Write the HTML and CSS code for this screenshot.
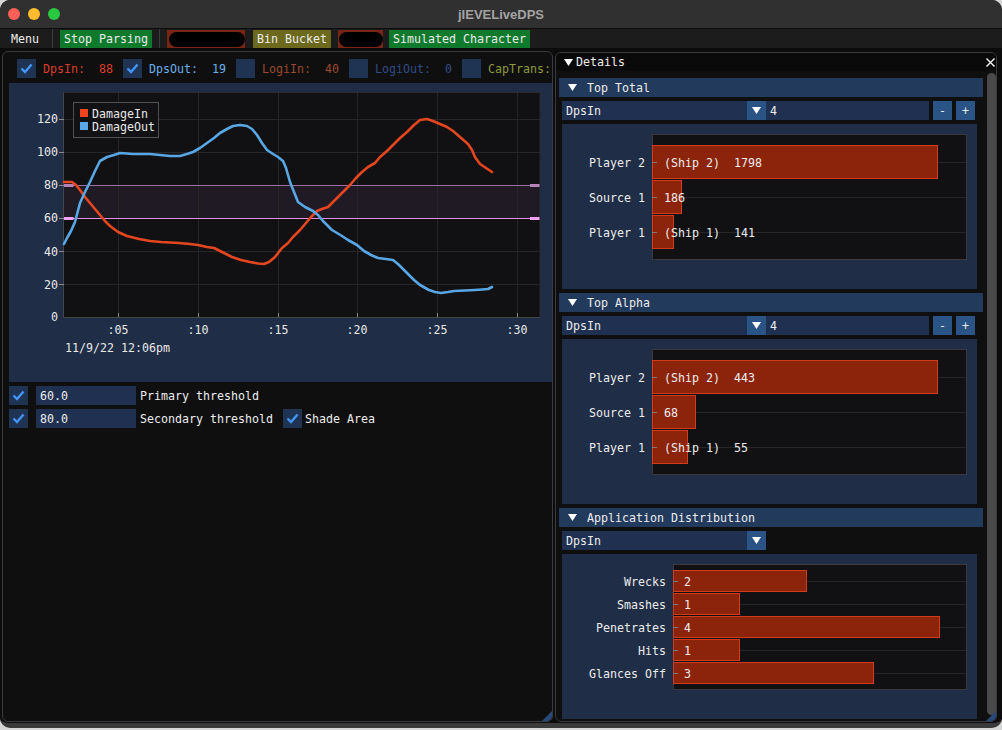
FILE: index.html
```html
<!DOCTYPE html>
<html>
<head>
<meta charset="utf-8">
<title>jIEVELiveDPS</title>
<link rel="stylesheet" href="styles.css">
</head>
<body>
<div class="app">
  <header class="titlebar">
    <div class="lights">
      <span class="light l-red"></span>
      <span class="light l-yellow"></span>
      <span class="light l-green"></span>
    </div>
    <div class="title">jIEVELiveDPS</div>
    <div></div>
  </header>

  <nav class="menubar">
    <span class="menu-label">Menu</span>
    <span class="msep sep1"></span>
    <span class="mbtn green stop">Stop Parsing</span>
    <span class="msep sep2"></span>
    <span class="redact r1"><span class="blob"></span></span>
    <span class="mbtn olive bin">Bin Bucket</span>
    <span class="redact r2"><span class="blob"></span></span>
    <span class="mbtn green sim">Simulated Character</span>
  </nav>

  <main class="workspace">
    <section class="win main-win">
      <div class="toggles">
        <div class="toggle"><span class="cb"><svg width="19" height="19" viewBox="0 0 19 19"><polyline points="4.5,9.5 8,13 14.5,5.5" class="tick"/></svg></span><span class="lbl c-dpsin">DpsIn:  88</span></div>
        <div class="toggle"><span class="cb"><svg width="19" height="19" viewBox="0 0 19 19"><polyline points="4.5,9.5 8,13 14.5,5.5" class="tick"/></svg></span><span class="lbl c-dpsout">DpsOut:  19</span></div>
        <div class="toggle"><span class="cb"></span><span class="lbl c-logiin">LogiIn:  40</span></div>
        <div class="toggle"><span class="cb"></span><span class="lbl c-logiout">LogiOut:  0</span></div>
        <div class="toggle"><span class="cb"></span><span class="lbl c-cap">CapTrans:</span></div>
      </div>

      <div class="chart-frame">
        <svg class="chart" width="543" height="299" viewBox="9 83 543 299">
          <rect x="63.5" y="92" width="476.5" height="225" fill="#111113"/>
          <rect x="64" y="185" width="476" height="33" fill="#201a24"/>
          <g class="grid">
            <line x1="64" x2="540" y1="119.5" y2="119.5"/>
            <line x1="64" x2="540" y1="152.5" y2="152.5"/>
            <line x1="64" x2="540" y1="251.5" y2="251.5"/>
            <line x1="64" x2="540" y1="284.5" y2="284.5"/>
            <line x1="118.5" x2="118.5" y1="92" y2="317"/>
            <line x1="198.5" x2="198.5" y1="92" y2="317"/>
            <line x1="278.5" x2="278.5" y1="92" y2="317"/>
            <line x1="357.5" x2="357.5" y1="92" y2="317"/>
            <line x1="437.5" x2="437.5" y1="92" y2="317"/>
            <line x1="517.5" x2="517.5" y1="92" y2="317"/>
          </g>
          <line x1="64" x2="540" y1="185.5" y2="185.5" stroke="#a06ea6" stroke-width="1"/>
          <line x1="64" x2="540" y1="218.5" y2="218.5" stroke="#e48fe6" stroke-width="1"/>
          <rect x="63.5" y="184" width="10" height="3" fill="#b583b9"/>
          <rect x="530" y="184" width="10" height="3" fill="#b583b9"/>
          <rect x="63.5" y="217" width="10" height="3" fill="#f0a2f0"/>
          <rect x="530" y="217" width="10" height="3" fill="#f0a2f0"/>
          <g class="axis">
            <line x1="63.5" x2="63.5" y1="92" y2="317.5"/>
            <line x1="63.5" x2="540" y1="317.5" y2="317.5"/>
            <line x1="540" x2="540" y1="92" y2="317.5" class="edge"/>
            <line x1="63.5" x2="540" y1="92.5" y2="92.5" class="edge"/>
          </g>
          <g class="ticks">
            <line x1="59" x2="64" y1="119.5" y2="119.5"/>
            <line x1="59" x2="64" y1="152.5" y2="152.5"/>
            <line x1="59" x2="64" y1="185.5" y2="185.5"/>
            <line x1="59" x2="64" y1="218.5" y2="218.5"/>
            <line x1="59" x2="64" y1="251.5" y2="251.5"/>
            <line x1="59" x2="64" y1="284.5" y2="284.5"/>
            <line x1="118.5" x2="118.5" y1="313" y2="317"/>
            <line x1="198.5" x2="198.5" y1="313" y2="317"/>
            <line x1="278.5" x2="278.5" y1="313" y2="317"/>
            <line x1="357.5" x2="357.5" y1="313" y2="317"/>
            <line x1="437.5" x2="437.5" y1="313" y2="317"/>
            <line x1="517.5" x2="517.5" y1="313" y2="317"/>
          </g>
          <g class="ylabels">
            <text x="58" y="123">120</text>
            <text x="58" y="156">100</text>
            <text x="58" y="189">80</text>
            <text x="58" y="222">60</text>
            <text x="58" y="256">40</text>
            <text x="58" y="289">20</text>
            <text x="58" y="321">0</text>
          </g>
          <g class="xlabels">
            <text x="118" y="334">:05</text>
            <text x="198" y="334">:10</text>
            <text x="278" y="334">:15</text>
            <text x="357" y="334">:20</text>
            <text x="437" y="334">:25</text>
            <text x="517" y="334">:30</text>
          </g>
          <text class="date" x="65" y="352">11/9/22 12:06pm</text>

          <polyline class="curve c-in" points="64,182 72,182 76,185 80,190 85,197 90,203 95,209 100,215 105,221 110,226 118,232 127,236 139,239 150,241 161,242 179,243 190,244 198,245 207,247 214,248 222,252 232,257 241,260 250,262 258,263.5 264,264 269,262 275,257 282,248 288,243 293,237 300,230 306,223 311,217 317,211 322,209 328,207 333,202 338,197 344,191 350,185 356,178 362,172 368,167 375,163 380,157 387,151 393,145 400,138 407,132 414,125 420,120 427,119 433,121 440,124 447,127 453,131 460,137 468,144 472,150 475,157 480,164 486,168 492,172"/>
          <polyline class="curve c-out" points="64,244 67,238 71,231 75,222 80,203 85,192 90,182 95,171 100,161 107,157 114,155 120,153 133,154 150,154 160,155 170,156 180,156 187,154 193,152 200,148 207,143 214,138 220,133 227,129 233,126 240,125 247,126 252,129 257,135 262,143 267,150 273,154 278,157 283,161 286,168 290,182 294,192 298,202 305,207 313,211 318,215 323,221 328,226 332,230 337,233 342,236 348,240 357,245 364,251 371,255 378,258 386,259 393,260 398,264 404,270 409,275 414,280 420,285 429,290 435,292 441,293 448,292 454,291 465,290.5 475,290 482,289.5 488,289 492,287"/>

          <g class="legend">
            <rect x="73.5" y="102.5" width="85" height="35" class="legend-box"/>
            <rect x="80" y="109" width="8" height="8" fill="#ee4420"/>
            <rect x="80" y="122" width="8" height="8" fill="#5aaaea"/>
            <text x="92" y="118">DamageIn</text>
            <text x="92" y="131">DamageOut</text>
          </g>
        </svg>
      </div>

      <div class="thresholds">
        <div class="trow">
          <span class="cb"><svg width="19" height="19" viewBox="0 0 19 19"><polyline points="4.5,9.5 8,13 14.5,5.5" class="tick"/></svg></span>
          <span class="input">60.0</span>
          <span class="tlbl">Primary threshold</span>
        </div>
        <div class="trow">
          <span class="cb"><svg width="19" height="19" viewBox="0 0 19 19"><polyline points="4.5,9.5 8,13 14.5,5.5" class="tick"/></svg></span>
          <span class="input">80.0</span>
          <span class="tlbl">Secondary threshold</span>
          <span class="cb shade-cb"><svg width="19" height="19" viewBox="0 0 19 19"><polyline points="4.5,9.5 8,13 14.5,5.5" class="tick"/></svg></span>
          <span class="shade-lbl">Shade Area</span>
        </div>
      </div>
      <span class="grip"></span>
    </section>

    <section class="win details">
      <div class="win-title">
        <svg class="tri" width="9" height="7" viewBox="0 0 9 7"><polygon points="0,0 9,0 4.5,7"/></svg>
        <span class="wt-text">Details</span>
        <svg class="close" width="9" height="9" viewBox="0 0 9 9"><path d="M0.5 0.5 L8.5 8.5 M8.5 0.5 L0.5 8.5"/></svg>
      </div>
      <div class="details-body">
        <div class="header">
          <svg class="tri" width="9" height="7" viewBox="0 0 9 7"><polygon points="0,0 9,0 4.5,7"/></svg>
          <span>Top Total</span>
        </div>
        <div class="controls">
          <span class="combo">DpsIn</span>
          <span class="arrow"><svg width="9" height="7" viewBox="0 0 9 7"><polygon points="0,0 9,0 4.5,7" fill="#fff"/></svg></span>
          <span class="num">4</span>
          <span class="pm">-</span>
          <span class="pm">+</span>
        </div>
        <div class="frame top">
          <div class="labels">
            <span>Player 2</span>
            <span>Source 1</span>
            <span>Player 1</span>
          </div>
          <div class="plot">
            <div class="brow"><div class="bar" style="width:90.9%"></div><span class="val">(Ship 2)  1798</span></div>
            <div class="brow"><div class="bar" style="width:9.4%"></div><span class="val">186</span></div>
            <div class="brow"><div class="bar" style="width:7.1%"></div><span class="val">(Ship 1)  141</span></div>
          </div>
        </div>

        <div class="header">
          <svg class="tri" width="9" height="7" viewBox="0 0 9 7"><polygon points="0,0 9,0 4.5,7"/></svg>
          <span>Top Alpha</span>
        </div>
        <div class="controls">
          <span class="combo">DpsIn</span>
          <span class="arrow"><svg width="9" height="7" viewBox="0 0 9 7"><polygon points="0,0 9,0 4.5,7" fill="#fff"/></svg></span>
          <span class="num">4</span>
          <span class="pm">-</span>
          <span class="pm">+</span>
        </div>
        <div class="frame top">
          <div class="labels">
            <span>Player 2</span>
            <span>Source 1</span>
            <span>Player 1</span>
          </div>
          <div class="plot">
            <div class="brow"><div class="bar" style="width:90.9%"></div><span class="val">(Ship 2)  443</span></div>
            <div class="brow"><div class="bar" style="width:13.9%"></div><span class="val">68</span></div>
            <div class="brow"><div class="bar" style="width:11.3%"></div><span class="val">(Ship 1)  55</span></div>
          </div>
        </div>

        <div class="header">
          <svg class="tri" width="9" height="7" viewBox="0 0 9 7"><polygon points="0,0 9,0 4.5,7"/></svg>
          <span>Application Distribution</span>
        </div>
        <div class="controls">
          <span class="combo">DpsIn</span>
          <span class="arrow"><svg width="9" height="7" viewBox="0 0 9 7"><polygon points="0,0 9,0 4.5,7" fill="#fff"/></svg></span>
        </div>
        <div class="frame dist">
          <div class="labels">
            <span>Wrecks</span>
            <span>Smashes</span>
            <span>Penetrates</span>
            <span>Hits</span>
            <span>Glances Off</span>
          </div>
          <div class="plot">
            <div class="brow"><div class="bar" style="width:45.45%"></div><span class="val">2</span></div>
            <div class="brow"><div class="bar" style="width:22.7%"></div><span class="val">1</span></div>
            <div class="brow"><div class="bar" style="width:90.9%"></div><span class="val">4</span></div>
            <div class="brow"><div class="bar" style="width:22.7%"></div><span class="val">1</span></div>
            <div class="brow"><div class="bar" style="width:68.2%"></div><span class="val">3</span></div>
          </div>
        </div>
      </div>
      <span class="scrollbar"></span>
      <span class="grip"></span>
    </section>
  </main>
</div>
</body>
</html>
```

FILE: styles.css
```css
* { box-sizing: border-box; }

html, body {
  margin: 0;
  padding: 0;
}

body {
  width: 1002px;
  height: 730px;
  overflow: hidden;
  background: #d6d6d6;
  font-family: "DejaVu Sans Mono", "Liberation Mono", monospace;
  font-size: 11.63px;
  color: #ececec;
}

.app {
  width: 1002px;
  height: 728px;
  border-radius: 10px;
  overflow: hidden;
  background: #0c0c0c;
  display: flex;
  flex-direction: column;
  border-bottom: 5px solid #3a3a3a;
}

/* ---------- mac title bar ---------- */
.titlebar {
  height: 29px;
  flex: none;
  background: #303030;
  border-bottom: 1px solid #0c0c0c;
  display: grid;
  grid-template-columns: 1fr auto 1fr;
  align-items: center;
}
.lights {
  display: flex;
  gap: 8px;
  padding-left: 8px;
}
.light {
  width: 12px;
  height: 12px;
  border-radius: 50%;
}
.l-red { background: #fe5f57; }
.l-yellow { background: #febc2e; }
.l-green { background: #28c840; }
.title {
  font-family: "Liberation Sans", Arial, sans-serif;
  font-weight: bold;
  font-size: 13px;
  color: #a3a3a3;
}

/* ---------- menu bar ---------- */
.menubar {
  height: 19px;
  flex: none;
  background: #1c1c1c;
  display: flex;
  align-items: stretch;
  line-height: 19px;
  white-space: nowrap;
}
.menu-label { margin-left: 11px; padding-top: 1px; }
.msep {
  width: 1px;
  background: #3d3d3d;
}
.sep1 { margin-left: 13px; }
.sep2 { margin-left: 7px; }
.mbtn {
  margin-top: 1px;
  line-height: 18px;
  padding: 0 4px;
}
.green { background: #0f7a2c; }
.olive { background: #6c691d; }
.stop { margin-left: 7px; }
.bin { margin-left: 8px; }
.sim { margin-left: 6px; }
.redact {
  margin-top: 1px;
  background: #7a2513;
  display: flex;
  align-items: center;
}
.redact .blob {
  display: block;
  height: 15px;
  background: #000;
  border-radius: 8px;
}
.r1 { margin-left: 7px; width: 78px; }
.r1 .blob { width: 80px; margin-left: 2px; }
.r2 { margin-left: 7px; width: 45px; }
.r2 .blob { width: 45px; margin-left: 1px; }

/* ---------- workspace & windows ---------- */
.workspace {
  flex: 1;
  display: flex;
  align-items: flex-start;
  gap: 2px;
  padding: 3px 0 0 2px;
  background: #0c0c0c;
}
.win {
  position: relative;
  background: #0f0f0f;
  border: 1px solid #3a3a40;
  border-radius: 6px;
  flex: none;
}

.main-win {
  width: 551px;
  height: 671px;
  padding: 7px 0 0 6px;
}

.toggles {
  margin-left: 8px;
  width: 535px;
  height: 19px;
  display: flex;
  align-items: center;
  white-space: nowrap;
}
.toggle {
  display: flex;
  align-items: center;
  flex: none;
  margin-right: 10px;
}
.toggle .lbl {
  margin-left: 7px;
  white-space: pre;
  line-height: 19px;
  padding-top: 2px;
}
.c-dpsin { color: #dc3d2a; }
.c-dpsout { color: #69afee; }
.c-logiin { color: #9a4a2e; }
.c-logiout { color: #304c84; }
.c-cap { color: #8e9a3c; }

.cb {
  width: 19px;
  height: 19px;
  flex: none;
  background: #1f3352;
  display: block;
}
.cb svg { display: block; }
.tick {
  fill: none;
  stroke: #4296fa;
  stroke-width: 2.4;
  stroke-linecap: butt;
  stroke-linejoin: miter;
}

.chart-frame {
  margin-top: 5px;
  width: 543px;
  height: 299px;
  background: #1f2d46;
}
.chart { display: block; }
.chart text {
  font-family: "DejaVu Sans Mono", "Liberation Mono", monospace;
  font-size: 11.63px;
  fill: #e8e8e8;
}
.grid line { stroke: #262629; stroke-width: 1; }
.axis line { stroke: #45454a; stroke-width: 1; }
.axis line.edge { stroke: #2a2a2e; }
.ticks line { stroke: #8a8a8a; stroke-width: 1; }
.ylabels text { text-anchor: end; }
.xlabels text { text-anchor: middle; }
.curve {
  fill: none;
  stroke-width: 2.6;
  stroke-linejoin: round;
  stroke-linecap: round;
}
.c-in { stroke: #e4461f; }
.c-out { stroke: #58a7e4; }
.legend-box {
  fill: #121214;
  stroke: #505055;
  stroke-width: 1;
}

.thresholds {
  margin-top: 4px;
  display: flex;
  flex-direction: column;
  gap: 4px;
}
.trow {
  height: 19px;
  display: flex;
  align-items: center;
  line-height: 19px;
  white-space: nowrap;
}
.input {
  width: 100px;
  height: 19px;
  margin-left: 8px;
  padding: 1px 0 0 4px;
  background: #1f3050;
}
.tlbl { margin-left: 4px; padding-top: 2px; }
.shade-cb { margin-left: 10px; }
.shade-lbl { margin-left: 3px; padding-top: 2px; }

.grip {
  position: absolute;
  right: 0;
  bottom: 0;
  width: 10px;
  height: 10px;
  background: #284a78;
  clip-path: polygon(100% 0, 100% 100%, 0 100%);
  border-bottom-right-radius: 5px;
}

/* ---------- details window ---------- */
.details {
  width: 442px;
  height: 670px;
  margin-top: 1px;
  display: flex;
  flex-direction: column;
}
.win-title {
  height: 18px;
  flex: none;
  background: #0a0a0a;
  border-radius: 5px 5px 0 0;
  display: flex;
  align-items: center;
  padding-left: 8px;
  line-height: 18px;
}
.tri { display: block; flex: none; }
.tri polygon { fill: #ffffff; }
.wt-text { margin-left: 3px; }
.close {
  display: block;
  margin-left: auto;
  margin-right: 1px;
}
.close path {
  stroke: #ffffff;
  stroke-width: 1.3;
  fill: none;
}

.details-body {
  flex: 1;
  padding: 7px 0 0 6px;
  display: flex;
  flex-direction: column;
  gap: 4px;
}
.header {
  margin-left: -3px;
  width: 424px;
  height: 19px;
  flex: none;
  background: #223a5c;
  display: flex;
  align-items: center;
  padding-left: 9px;
  line-height: 19px;
}
.header span { margin-left: 10px; padding-top: 2px; }

.controls {
  height: 19px;
  flex: none;
  display: flex;
  line-height: 19px;
}
.combo {
  width: 185px;
  padding: 1px 0 0 4px;
  background: #1f3050;
}
.arrow {
  width: 19px;
  background: #2b5486;
  display: flex;
  align-items: center;
  justify-content: center;
}
.arrow svg { display: block; }
.num {
  width: 163px;
  padding: 1px 0 0 4px;
  background: #1f3050;
}
.pm {
  width: 19px;
  margin-left: 4px;
  padding-top: 1px;
  background: #2b5486;
  text-align: center;
}

.frame {
  width: 415px;
  height: 165px;
  flex: none;
  background: #1f2d46;
  padding-top: 10px;
  display: grid;
  align-items: start;
}
.frame.top { grid-template-columns: 90px 315px; }
.frame.dist { grid-template-columns: 111px 294px; }

.labels {
  display: flex;
  flex-direction: column;
  gap: 1px;
  padding-right: 7px;
  text-align: right;
  white-space: pre;
}
.labels span { padding-top: 1px; }
.plot {
  height: 126px;
  background: #111113;
  box-shadow: inset 0 0 0 1px #3a3a3e;
  display: flex;
  flex-direction: column;
  gap: 1px;
}
.top .labels, .top .plot { padding-top: 11px; }
.dist .labels, .dist .plot { padding-top: 6px; }
.top .labels span { height: 34px; line-height: 34px; }
.dist .labels span { height: 22px; line-height: 22px; }

.brow {
  position: relative;
  flex: none;
}
.top .brow { height: 34px; }
.dist .brow { height: 22px; }
.brow::before {
  content: "";
  position: absolute;
  left: 0;
  right: 1px;
  top: 50%;
  height: 1px;
  background: #262629;
}
.brow::after {
  content: "";
  position: absolute;
  left: 0;
  width: 5px;
  top: 50%;
  height: 1px;
  background: #7a7a7a;
}
.bar {
  position: relative;
  height: 100%;
  background: #8c240c;
  border: 1px solid #d23c1c;
}
.val {
  position: absolute;
  top: 1px;
  white-space: pre;
}
.top .val { left: 12px; line-height: 34px; }
.dist .val { left: 11px; line-height: 22px; }

.scrollbar {
  position: absolute;
  right: 0;
  top: 20px;
  bottom: 6px;
  width: 9px;
  border-radius: 5px;
  background: #4a4a4a;
}
```
